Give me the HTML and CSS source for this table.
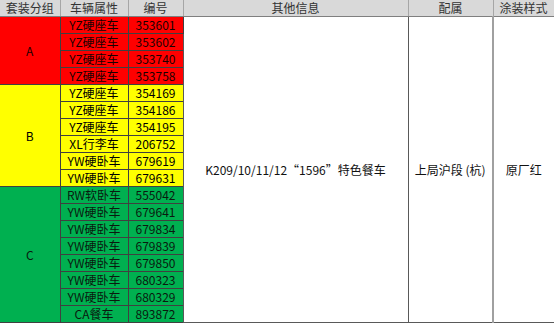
FILE: index.html
```html
<!DOCTYPE html>
<html>
<head>
<meta charset="utf-8">
<link rel="stylesheet" href="styles.css">
</head>
<body>
<table class="sheet">
  <colgroup>
    <col class="c1"><col class="c2"><col class="c3"><col class="c4"><col class="c5"><col class="c6">
  </colgroup>
  <thead>
    <tr class="head">
      <th>套装分组</th><th>车辆属性</th><th>编号</th><th>其他信息</th><th>配属</th><th class="last">涂装样式</th>
    </tr>
  </thead>
  <tbody>
    <tr class="red"><td rowspan="4" class="grp">A</td><td>YZ硬座车</td><td>353601</td>
      <td rowspan="18" class="merged">K209/10/11/12“1596”特色餐车</td>
      <td rowspan="18" class="merged pei">上局沪段 (杭)</td>
      <td rowspan="18" class="merged last">原厂红</td></tr>
    <tr class="red"><td>YZ硬座车</td><td>353602</td></tr>
    <tr class="red"><td>YZ硬座车</td><td>353740</td></tr>
    <tr class="red"><td>YZ硬座车</td><td>353758</td></tr>
    <tr class="yellow"><td rowspan="6" class="grp">B</td><td>YZ硬座车</td><td>354169</td></tr>
    <tr class="yellow"><td>YZ硬座车</td><td>354186</td></tr>
    <tr class="yellow"><td>YZ硬座车</td><td>354195</td></tr>
    <tr class="yellow"><td>XL行李车</td><td>206752</td></tr>
    <tr class="yellow"><td>YW硬卧车</td><td>679619</td></tr>
    <tr class="yellow"><td>YW硬卧车</td><td>679631</td></tr>
    <tr class="green"><td rowspan="8" class="grp">C</td><td>RW软卧车</td><td>555042</td></tr>
    <tr class="green"><td>YW硬卧车</td><td>679641</td></tr>
    <tr class="green"><td>YW硬卧车</td><td>679834</td></tr>
    <tr class="green"><td>YW硬卧车</td><td>679839</td></tr>
    <tr class="green"><td>YW硬卧车</td><td>679850</td></tr>
    <tr class="green"><td>YW硬卧车</td><td>680323</td></tr>
    <tr class="green"><td>YW硬卧车</td><td>680329</td></tr>
    <tr class="green"><td>CA餐车</td><td>893872</td></tr>
  </tbody>
</table>
</body>
</html>
```
FILE: styles.css
```css
html, body {
  margin: 0;
  padding: 0;
  background: #ffffff;
}
.sheet {
  border-collapse: collapse;
  table-layout: fixed;
  width: 554px;
  font-family: "Noto Sans CJK SC", "Noto Sans", sans-serif;
  font-size: 12px;
  color: #000;
}
.c1 { width: 60px; }
.c2 { width: 68px; }
.c3 { width: 55px; }
.c4 { width: 225px; }
.c5 { width: 85px; }
.c6 { width: 61px; }
.sheet th, .sheet td {
  padding: 0;
  text-align: center;
  vertical-align: middle;
  line-height: 16px;
  height: 16px;
  white-space: nowrap;
  overflow: hidden;
}
.head th {
  background: #d9d9d9;
  font-weight: normal;
  color: #333;
  border-left: 1px solid #a6a6a6;
  border-right: 1px solid #a6a6a6;
  border-bottom: 1px solid #7f7f7f;
}
.head th:first-child { border-left: none; }
.sheet td {
  border: 1px solid #404040;
}
.red td { background: #ff0000; color: #1a0000; }
.yellow td { background: #ffff00; }
.green td { background: #00b050; color: #0a1a0f; }
.sheet td.grp { border-left: none; }
.sheet td.merged {
  background: #ffffff;
  color: #111;
  border-top: none;
  border-color: #595959;
}
.sheet td.pei { border-right: 2px solid #a0a0a0; }
.sheet .last { border-right: 1px solid #595959; }
```
